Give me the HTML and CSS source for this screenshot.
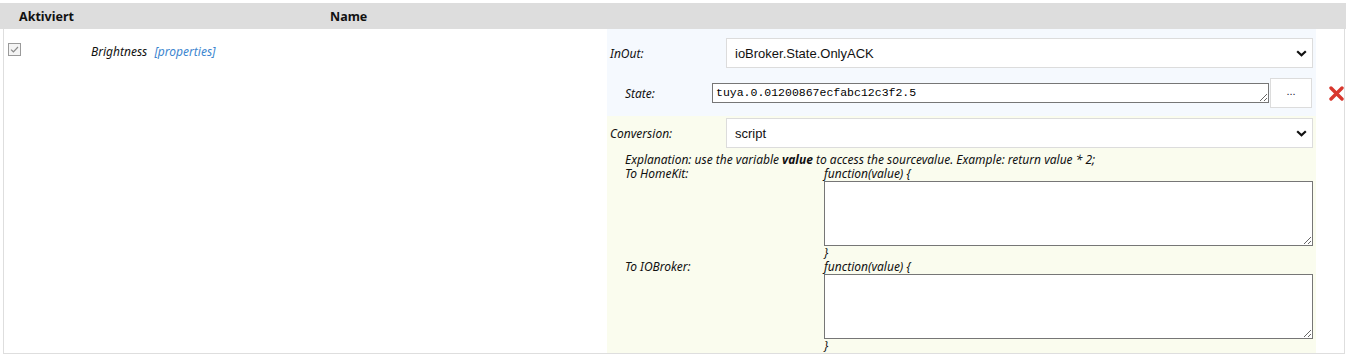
FILE: index.html
```html
<!DOCTYPE html>
<html lang="de">
<head>
    <meta charset="UTF-8">
    <title>Geräte</title>
    <link rel="stylesheet" href="styles.css">
</head>
<body>

<div class="table">
    <div class="thead">
        <div class="th th-active">Aktiviert</div>
        <div class="th th-name">Name</div>
    </div>

    <div class="tbody">
        <div class="row">
            <div class="cell cell-active">
                <span class="check">
                    <svg width="9" height="7" viewBox="0 0 9 7"><path d="M1 3.6 L3.4 5.8 L8 1" fill="none" stroke="#8a8a8a" stroke-width="1.2"/></svg>
                </span>
            </div>
            <div class="cell cell-name">
                <span class="char-name">Brightness</span>
                <a class="props" href="#">[properties]</a>
            </div>

            <div class="panel">
                <!-- InOut / State -->
                <div class="sec sec-inout">
                    <div class="frow">
                        <label class="lbl">InOut:</label>
                        <div class="sel-wrap">
                            <select class="sel">
                                <option>ioBroker.State.OnlyACK</option>
                            </select>
                            <svg class="chev" width="11" height="7" viewBox="0 0 11 7"><path d="M1.2 1.2 L5.5 5.3 L9.8 1.2" fill="none" stroke="#111" stroke-width="2.2"/></svg>
                        </div>
                    </div>
                    <div class="frow frow-state">
                        <label class="lbl lbl-sub">State:</label>
                        <textarea class="state-input" rows="1">tuya.0.01200867ecfabc12c3f2.5</textarea>
                        <button class="pick">...</button>
                    </div>
                </div>

                <!-- Conversion -->
                <div class="sec sec-conv">
                    <div class="frow">
                        <label class="lbl">Conversion:</label>
                        <div class="sel-wrap">
                            <select class="sel">
                                <option>script</option>
                            </select>
                            <svg class="chev" width="11" height="7" viewBox="0 0 11 7"><path d="M1.2 1.2 L5.5 5.3 L9.8 1.2" fill="none" stroke="#111" stroke-width="2.2"/></svg>
                        </div>
                    </div>
                    <div class="script-box">
                        <div class="expl">Explanation: use the variable <b>value</b> to access the sourcevalue. Example: return value * 2;</div>
                        <div class="fn-row">
                            <div class="fn-lbl">To HomeKit:</div>
                            <div class="fn">
                                <div>function(value) {</div>
                                <textarea class="code"></textarea>
                                <div>}</div>
                            </div>
                        </div>
                        <div class="fn-row">
                            <div class="fn-lbl">To IOBroker:</div>
                            <div class="fn">
                                <div>function(value) {</div>
                                <textarea class="code"></textarea>
                                <div>}</div>
                            </div>
                        </div>
                    </div>
                </div>
            </div>

            <div class="cell cell-del">
                <svg width="15" height="15" viewBox="0 0 15 15"><path d="M2 2 L13 13 M13 2 L2 13" stroke="#d8362c" stroke-width="3.4" stroke-linecap="round"/></svg>
            </div>
        </div>
    </div>
</div>

</body>
</html>
```

FILE: styles.css
```css
body {
    margin: 0;
    background: #fff;
    color: #111;
    font-family: 'Noto Sans', sans-serif;
    font-size: 12px;
}
.table {
    padding-top: 3px;
    width: 1346px;
}
.thead {
    display: flex;
    height: 26px;
    background: #dddddd;
    align-items: center;
}
.th { font-weight: bold; font-size: 12.5px; }
.th-active { width: 311px; padding-left: 19px; }

.tbody {
    margin-left: 3px;
    width: 1340px;
    border: 1px solid #dedede;
    border-top: none;
}
.row { display: flex; }
.cell-active { width: 83px; padding: 14px 0 0 4px; }
.check {
    display: flex;
    align-items: center;
    justify-content: center;
    width: 11px;
    height: 11px;
    border: 1px solid #9a9a9a;
    background: #f4f4f4;
}
.cell-name { width: 516px; padding-top: 15px; line-height: 16px; font-style: italic; }
.props { color: #3d86cf; text-decoration: none; margin-left: 4px; }

.panel { width: 709px; }
.sec { padding: 0 3px; }
.sec-inout { background: #f5f9fe; padding-top: 9px; padding-bottom: 8px; }
.sec-conv { background: #fafcee; padding-top: 2px; }
.frow { display: flex; align-items: center; }
.frow-state { margin-top: 10px; padding-left: 15px; }
.lbl { width: 116px; font-style: italic; }
.lbl-sub { width: 87px; }

.sel-wrap { position: relative; }
.sel {
    appearance: none;
    -webkit-appearance: none;
    width: 587px;
    height: 30px;
    border: 1px solid #dcdcdc;
    background: #fff;
    padding: 0 8px;
    font-family: 'Liberation Sans', Arial, sans-serif;
    font-size: 13px;
    color: #111;
    display: block;
}
.chev { position: absolute; right: 6px; top: 12px; pointer-events: none; }

.state-input {
    width: 557px;
    height: 20px;
    box-sizing: border-box;
    margin: 0;
    padding: 2px 3px;
    border: 1px solid #767676;
    font-family: 'Liberation Mono', monospace;
    font-size: 11.5px;
    line-height: 14px;
    overflow: hidden;
    resize: both;
}
.pick {
    width: 42px;
    height: 30px;
    margin-left: 1px;
    border: 1px solid #dcdcdc;
    background: #fff;
    font-size: 11px;
    color: #1c2433;
    padding: 0 0 4px;
}

.script-box { margin-top: 5px; padding-left: 15px; font-style: italic; line-height: 14px; }
.fn-row { display: flex; }
.fn-lbl { width: 199px; }
.code {
    display: block;
    width: 489px;
    height: 65px;
    box-sizing: border-box;
    margin: 0;
    border: 1px solid #767676;
}
.cell-del { padding: 57px 0 0 13px; }
```
